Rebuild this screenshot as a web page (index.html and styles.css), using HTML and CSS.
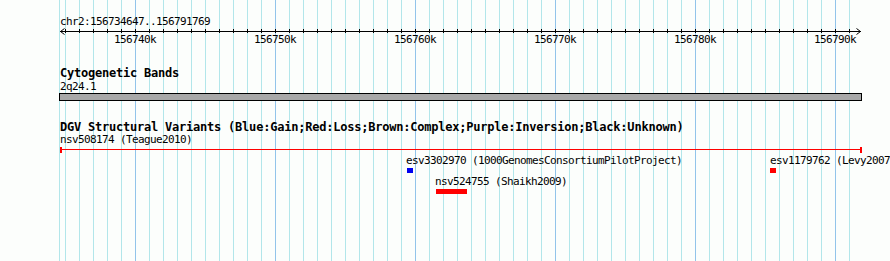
FILE: index.html
```html
<!DOCTYPE html>
<html lang="en">

<head>
    <meta charset="UTF-8">
    <meta name="viewport" content="width=device-width, initial-scale=1.0">
    <title>Region overview</title>
    <link rel="stylesheet" href="styles.css">
</head>

<body>
    <div class="Panel">
        <div class="ruler">
            <div class="range">chr2:156734647..156791769</div>
            <svg class="axis" width="803" height="5" viewBox="0 0 803 5">
                <g stroke="#000" stroke-width="1" shape-rendering="crispEdges" fill="none">
                    <line x1="1" y1="3.5" x2="802" y2="3.5" />
                    <path d="M1.5 3.5 L5.5 0.5 M1.5 3.5 L5.5 6.5" shape-rendering="auto" />
                    <path d="M801.5 3.5 L797.5 0.5 M801.5 3.5 L797.5 6.5" shape-rendering="auto" />
                    <path id="ticks" d="" />
                </g>
            </svg>
            <div class="tickLabels">
                <span style="left:55px">156740k</span>
                <span style="left:195px">156750k</span>
                <span style="left:335px">156760k</span>
                <span style="left:475px">156770k</span>
                <span style="left:615px">156780k</span>
                <span style="left:755px">156790k</span>
            </div>
        </div>

        <div class="track cyto">
            <div class="title">Cytogenetic Bands</div>
            <div class="label">2q24.1</div>
            <div class="band"></div>
        </div>

        <div class="track dgv">
            <div class="title">DGV Structural Variants (Blue:Gain;Red:Loss;Brown:Complex;Purple:Inversion;Black:Unknown)</div>
            <div class="features">
                <div class="flabel" style="left:1px;top:-1px">nsv508174 (Teague2010)</div>
                <div class="span loss" style="left:1px;top:15px;width:801px"></div>
                <div class="cap" style="left:1px;top:13px"></div>
                <div class="cap" style="left:801px;top:13px"></div>

                <div class="flabel" style="left:347px;top:20px">esv3302970 (1000GenomesConsortiumPilotProject)</div>
                <div class="box gain" style="left:348px;top:34px;width:3px"></div>
                <div class="box gain" style="left:351px;top:34px;width:3px"></div>

                <div class="flabel" style="left:376px;top:41px">nsv524755 (Shaikh2009)</div>
                <div class="box loss" style="left:377px;top:55px;width:31px"></div>

                <div class="flabel" style="left:711px;top:20px">esv1179762 (Levy2007)</div>
                <div class="box loss" style="left:711px;top:34px;width:6px"></div>
            </div>
        </div>
    </div>
    <script>
        let d = ""
        for (let x = 6; x < 802; x += 14) {
            d += "M" + (x + 0.5) + " 1 V5 "
        }
        document.getElementById("ticks").setAttribute("d", d)
    </script>
</body>

</html>
```

FILE: styles.css
```css
*{
    border: 0px;
    margin: 0px;
    padding: 0px;
    box-sizing: border-box;
}

html,
body {
    width: 890px;
    height: 261px;
    overflow: hidden;
    background-color: #fcfefc;
}

body {
    font-family: "DejaVu Sans Mono", "Liberation Mono", monospace;
    font-size: 11px;
    line-height: 13px;
    letter-spacing: -0.62px;
    color: #000;
}

.Panel {
    margin-left: 59px;
    width: 803px;
    height: 261px;
    padding-top: 15px;
    background-image:
        linear-gradient(to right, #b2e6ea 0 1px, transparent 1px),
        repeating-linear-gradient(to right, transparent 0 76px, #92c4ea 76px 77px, transparent 77px 140px),
        repeating-linear-gradient(to right, transparent 0 6px, #b2e6ea 6px 7px, transparent 7px 14px);
}

.range {
    height: 13px;
    padding-left: 1px;
}

.axis {
    display: block;
    overflow: visible;
}

.tickLabels {
    position: relative;
    height: 13px;
}

.tickLabels > span {
    position: absolute;
    top: 0;
    width: 42px;
    text-align: center;
}

.title {
    font-weight: bold;
    font-size: 12px;
    letter-spacing: -0.22px;
    height: 13px;
    padding-left: 1px;
    white-space: nowrap;
}

.cyto {
    margin-top: 21px;
}

.label {
    height: 13px;
    padding-left: 1px;
}

.band {
    height: 8px;
    background-color: #a8a8a8;
    border: 1px solid #000;
}

.dgv {
    margin-top: 20px;
}

.features {
    position: relative;
    height: 80px;
}

.features > * {
    position: absolute;
}

.flabel {
    white-space: nowrap;
    height: 13px;
}

.span {
    height: 1px;
}

.cap {
    width: 2px;
    height: 6px;
    background-color: #f00;
}

.box {
    height: 5px;
}

.loss {
    background-color: #f00;
}

.gain {
    background-color: #0000f0;
}
```
